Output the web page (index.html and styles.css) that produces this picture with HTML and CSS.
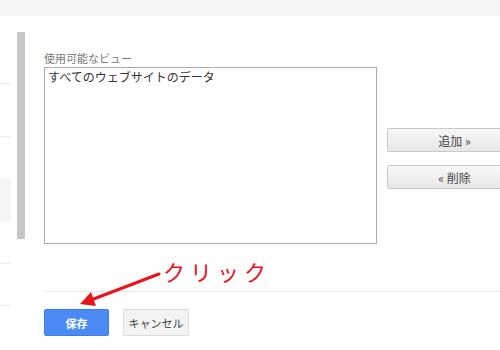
FILE: index.html
```html
<!DOCTYPE html>
<html lang="ja">
<head>
  <meta charset="UTF-8">
  <title>ビューの設定</title>
  <link rel="stylesheet" href="styles.css">
</head>
<body>
  <div class="topbar"></div>
  <div class="layout">
    <!-- left nav (cut off) -->
    <aside class="sidebar">
      <div class="nav-row first"></div>
      <div class="nav-row second"></div>
      <div class="nav-box"></div>
      <div class="nav-row third"></div>
      <div class="nav-row fourth"></div>
    </aside>
    <div class="divider"></div>

    <main class="main">
      <div class="picker">
        <div class="picker-col">
          <label class="label" for="views">使用可能なビュー</label>
          <div class="listbox" id="views">
            <div class="option">すべてのウェブサイトのデータ</div>
          </div>
        </div>
        <div class="picker-actions">
          <button class="btn-move">追加 &raquo;</button>
          <button class="btn-move">&laquo; 削除</button>
        </div>
      </div>

      <div class="form-actions">
        <button class="btn-save">保存</button>
        <button class="btn-cancel">キャンセル</button>
      </div>
    </main>
  </div>

  <!-- annotation -->
  <div class="note">クリック</div>
  <svg class="arrow" width="500" height="350" viewBox="0 0 500 350" aria-hidden="true">
    <line x1="159" y1="274" x2="91" y2="300" stroke="#e8141c" stroke-width="3" stroke-linecap="round"/>
    <polygon points="80,304 96,306 91,292" fill="#e8141c"/>
  </svg>
</body>
</html>
```

FILE: styles.css
```css
*{box-sizing:border-box;margin:0;padding:0}
body{
  width:500px;height:350px;overflow:hidden;position:relative;
  background:#fff;font-family:'Noto Sans CJK JP','Noto Sans',sans-serif;color:#333;
}
.topbar{height:16px;background:#f5f6f8}
.layout{display:flex;align-items:flex-start}

/* sidebar */
.sidebar{width:11px;flex:none;display:flex;flex-direction:column}
.nav-row{border-bottom:1px solid #ebebeb}
.nav-row.first{height:68px}
.nav-row.second{height:53px}
.nav-box{height:42px;margin-top:42px;background:#f6f6f6}
.nav-row.third{height:43px}
.nav-row.fourth{height:42px}

.divider{flex:none;width:8px;height:207px;margin:16px 0 0 6px;background:#c6c6c6}

/* main */
.main{flex:1;margin-left:19px;padding-top:34px}
.picker{display:flex;gap:10px}
.label{display:block;font-size:11px;line-height:16px;color:#777;margin-bottom:1px}
.listbox{width:333px;height:177px;border:1px solid #aaa;background:#fff;padding:1px 3px}
.option{font-size:12px;line-height:15px;color:#333}

.picker-actions{display:flex;flex-direction:column;gap:13px;padding-top:78px}
.btn-move{
  width:135px;height:24px;border:1px solid #c9c9c9;border-radius:2px;
  background:linear-gradient(#f8f8f8,#e7e7e7);
  font-family:inherit;font-size:12px;color:#444;
}

.form-actions{display:flex;gap:14px;margin-top:47px;padding-top:17px;border-top:1px solid #e8e8e8}
.btn-save,.btn-cancel{height:27px;border-radius:2px;font-family:inherit;font-size:11px}
.btn-save{width:65px;border:1px solid #3b7de9;background:#4a8cf3;color:#fff;font-weight:700}
.btn-cancel{width:66px;border:1px solid #dcdcdc;background:#f3f3f3;color:#444}

/* annotation over the page */
.note{
  position:absolute;left:163px;top:254px;
  font-size:22px;line-height:34px;letter-spacing:5px;color:#e8141c;
}
.arrow{position:absolute;left:0;top:0;pointer-events:none}
```
